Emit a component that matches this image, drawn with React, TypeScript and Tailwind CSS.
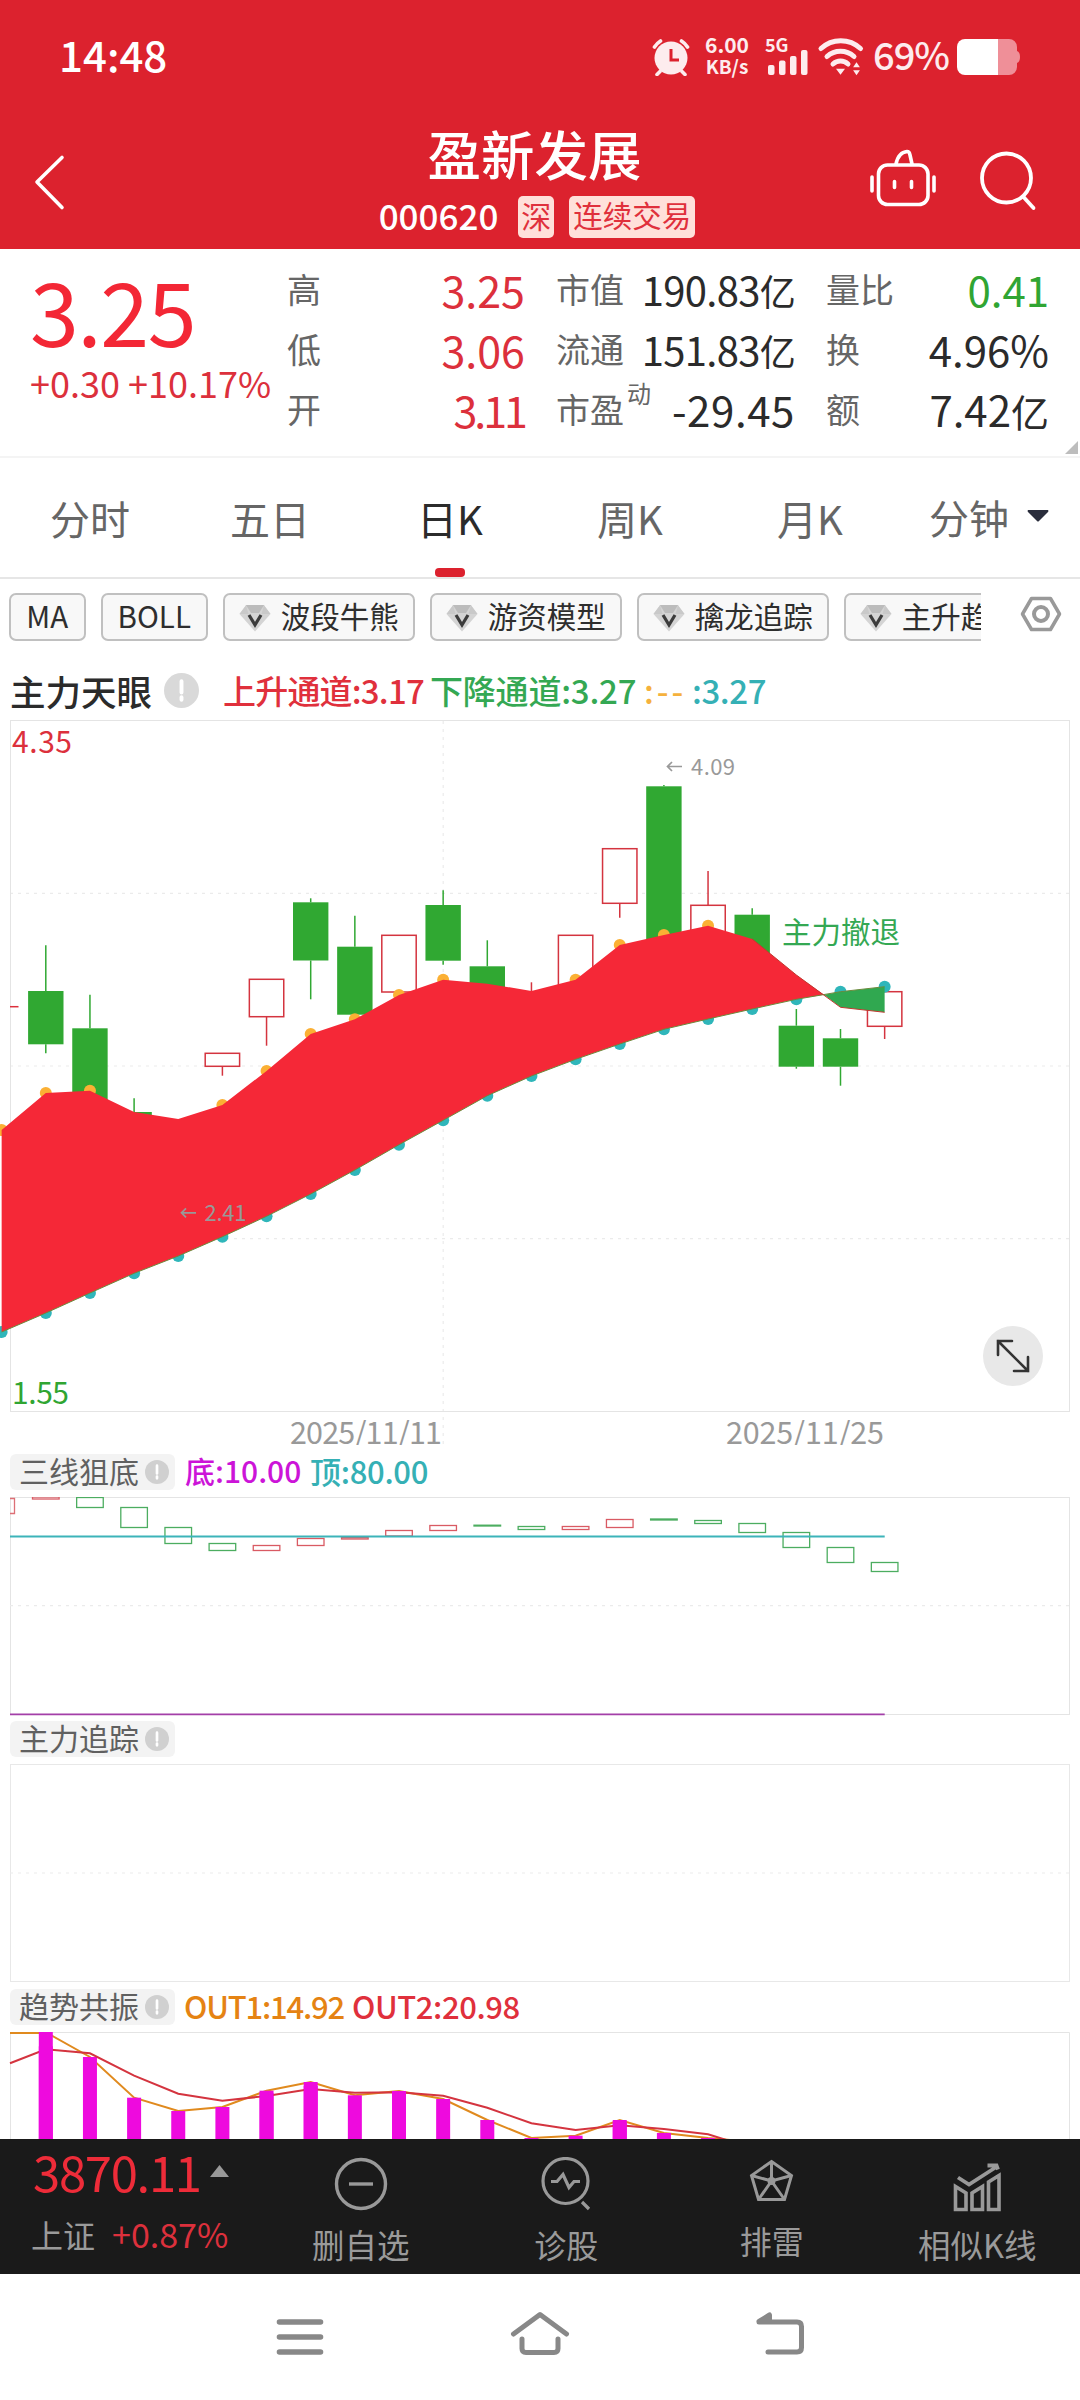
import React from "react";

const FONT = "'Noto Sans CJK SC', 'Noto Sans', sans-serif";

/** Horizontal centre of the n-th trading day. */
const cx = (i: number) => 45.8 + 44.15 * i;

type Candle = { i: number; up: boolean; hi?: number; top: number; bot: number; lo?: number };

const candles: Candle[] = [
  { i: 0, up: false, hi: 945.3, top: 991, bot: 1044.3, lo: 1053.3 },
  { i: 1, up: false, hi: 994.7, top: 1028.3, bot: 1130 },
  { i: 2, up: false, hi: 1098.3, top: 1112, bot: 1150 },
  { i: 4, up: true, top: 1053.3, bot: 1066.3, lo: 1075.7 },
  { i: 5, up: true, top: 979.3, bot: 1016.7, lo: 1045.7 },
  { i: 6, up: false, hi: 898.3, top: 902.3, bot: 960.5, lo: 999.3 },
  { i: 7, up: false, hi: 915.7, top: 946.7, bot: 1014.7 },
  { i: 8, up: true, top: 935.3, bot: 992 },
  { i: 9, up: false, hi: 890.3, top: 905, bot: 960.7, lo: 964.7 },
  { i: 10, up: false, hi: 940.3, top: 966.3, bot: 1000 },
  { i: 11, up: true, hi: 982.3, top: 1000, bot: 1010 },
  { i: 12, up: true, top: 935.3, bot: 1000 },
  { i: 13, up: true, top: 848.7, bot: 903.3, lo: 917.7 },
  { i: 14, up: false, hi: 785, top: 786.3, bot: 960 },
  { i: 15, up: true, hi: 871, top: 905.3, bot: 960 },
  { i: 16, up: false, hi: 908.3, top: 914.7, bot: 960 },
  { i: 17, up: false, hi: 1009, top: 1025.7, bot: 1066.7, lo: 1068.7 },
  { i: 18, up: false, hi: 1029, top: 1038.3, bot: 1066.7, lo: 1085.7 },
  { i: 19, up: true, top: 991.7, bot: 1026.3, lo: 1039 },
];

/* Channel lines; both start one day left of the first visible candle. */
const fast = [1130, 1093, 1090.7, 1112, 1119, 1105, 1071, 1034, 1019.3, 995, 979.7, 983.7, 991, 979.7, 945, 935, 925.7, 939, 975, 1007.3, 1012.3];
const slow = [1332, 1313, 1293, 1273.3, 1256, 1236.7, 1216.3, 1194, 1170, 1144.7, 1120.3, 1095.7, 1076, 1059.3, 1044, 1029.3, 1019, 1009, 999.3, 991.7, 986.7];
const orangeDays = [-1, 0, 1, 4, 5, 6, 7, 8, 9, 12, 13, 14, 15];

const pts = (ys: number[], from = -1) => ys.map((y, k) => `${cx(k + from)},${y}`);

const redArea = [...pts(fast.slice(0, 19)), "824,994.7", ...pts(slow.slice(0, 19)).reverse()].join(" ");
const greenArea = ["824,994.7", `${cx(18)},991.7`, `${cx(19)},986.7`, `${cx(19)},1012.3`, `${cx(18)},1007.3`].join(" ");

const bricks: [number, number, number, boolean][] = [
  [0, 1497, 1499, true], [1, 1497.5, 1507.5, false], [2, 1507.5, 1527.5, false], [3, 1527.5, 1543.5, false],
  [4, 1543.5, 1550.5, false], [5, 1545.5, 1550.5, true], [6, 1538.5, 1545.5, true], [7, 1537.5, 1539, true],
  [8, 1530.5, 1536, true], [9, 1525.5, 1530.5, true], [10, 1525.2, 1526, false], [11, 1526.5, 1529.5, false],
  [12, 1526.5, 1529.5, true], [13, 1519.5, 1527.5, true], [14, 1519, 1520, false], [15, 1520.5, 1523.5, false],
  [16, 1523.5, 1532.5, false], [17, 1532.5, 1547.5, false], [18, 1547.5, 1562.5, false], [19, 1562.5, 1571.5, false],
];

const bars = [2032, 2057, 2097.7, 2111, 2107, 2090.7, 2082, 2095.3, 2091, 2099, 2120, 2138, 2135.7, 2120, 2133, 2138];
const out2 = [2049.3, 2053.3, 2075.7, 2093.7, 2100.7, 2096, 2089, 2092.7, 2092.3, 2095.7, 2107.7, 2123.3, 2130, 2125.3, 2129, 2134.3, 2148];

const GRID = { stroke: "#ebebeb", strokeWidth: 1.2, strokeDasharray: "3 5" };

function StatusIcons() {
  return (
    <>
      <svg className="ml-[488px] mt-[38px] h-[38px] w-[38px] shrink-0" viewBox="652 38 38 38" fill="none">
        <circle cx="671" cy="58" r="16.5" fill="#fdecee" />
        <path d="M671 49v11h8" stroke="#dc222e" strokeWidth="3" />
        <path d="M654.5 47a20 20 0 0 1 6-6M687.5 47a20 20 0 0 0-6-6M657 74.500l3-3M685 74.500l-3-3" stroke="#fdecee" strokeWidth="3.600" strokeLinecap="round" />
      </svg>
      <div className="ml-[12px] mt-[34px] w-[50px] text-center font-bold text-[#fdecee]">
        <div className="text-[21px] leading-[21px]">6.00</div>
        <div className="text-[19px] leading-[21px]">KB/s</div>
      </div>
      <div className="ml-[13px] mt-[35px] w-[46px]">
        <div className="h-[15px] text-[18px] font-bold leading-none text-[#fdecee]">5G</div>
        <svg className="ml-[2px] h-[26px] w-[42px]" viewBox="767 50 42 26" fill="#fdecee">
          <rect x="768" y="65" width="6.500" height="10" rx="2" />
          <rect x="779" y="60.500" width="6.500" height="14.500" rx="2" />
          <rect x="790" y="56" width="6.500" height="19" rx="2" />
          <rect x="801" y="50" width="6.500" height="25" rx="2" />
        </svg>
      </div>
      <svg className="ml-[6px] mt-[37px] h-[40px] w-[48px] shrink-0" viewBox="817 37 48 40" fill="none" stroke="#fdecee" strokeWidth="5" strokeLinecap="round">
        <path d="M821 48.500a29 29 0 0 1 39.500 0M827 56.500a20 20 0 0 1 27 0M833 64a11 11 0 0 1 15 0" />
        <path d="M837.500 69.500h6l-3 4zM854.500 66.500h4l-2-3zM854.500 71h4l-2 3z" fill="#fdecee" strokeWidth="1.500" />
      </svg>
      <div className="ml-[8px] mt-[35px] w-[81px] text-[38px] font-medium leading-none tracking-[-1px] text-[#fdecee]">69%</div>
      <svg className="ml-[3px] mt-[39px] h-[36px] w-[64px] shrink-0" viewBox="957 39 64 36">
        <path d="M998 39h11a8 8 0 0 1 8 8v4q3 1 3 6t-3 6v4a8 8 0 0 1-8 8h-11z" fill="#ef8f98" />
        <path d="M998 39h-33a8 8 0 0 0-8 8v20a8 8 0 0 0 8 8h33z" fill="#fff" />
      </svg>
    </>
  );
}

function Header() {
  return (
    <header className="flex h-[249px] flex-col bg-[#dc222e] text-white">
      <div className="flex h-[113px] shrink-0 items-start">
        <div className="ml-[59px] mt-[33px] w-[105px] whitespace-nowrap text-[42px] font-medium leading-none">14:48</div>
        <StatusIcons />
      </div>
      <div className="flex h-[135px] items-start">
        <svg className="ml-[30px] mt-[39px] h-[60px] w-[38px] shrink-0" viewBox="30 152 38 60" fill="none" stroke="#fff" strokeWidth="3.600" strokeLinecap="round" strokeLinejoin="round">
          <path d="M62 157.500 37 182l25 25.500" />
        </svg>
        <div className="ml-[199px] flex w-[540px] flex-col items-center">
          <h1 className="mt-[13px] pr-[5px] text-[53.500px] font-medium leading-none">盈新发展</h1>
          <div className="mt-[16.500px] flex h-[42px] items-start">
            <span className="mt-px text-[35px] font-medium leading-none">000620</span>
            <span className="ml-[20px] flex h-[42px] w-[36px] justify-center rounded-[5px] bg-[#ffe0da] pt-[4px] text-[30px] leading-none text-[#e0303c]">深</span>
            <span className="ml-[15px] flex h-[42px] w-[126px] justify-center rounded-[5px] bg-[#ffe0da] pt-[4px] text-[29.500px] leading-none text-[#e0303c]">连续交易</span>
          </div>
        </div>
        <svg className="ml-[60px] mt-[33px] h-[64px] w-[70px] shrink-0" viewBox="867 146 70 64" fill="none" stroke="#fff" strokeWidth="3.600" strokeLinecap="round" strokeLinejoin="round">
          <rect x="878.500" y="165" width="49.500" height="39.500" rx="9" />
          <path d="M872 177v14M934 177v14M894.500 181.500v6M911.500 181.500v6M896 164c1.500-7 5-12 11-12.500 2.500 0 2.500 1.500 3 3.500l2 9" />
        </svg>
        <svg className="ml-[40px] mt-[34px] h-[66px] w-[62px] shrink-0" viewBox="977 147 62 66" fill="none" stroke="#fff" strokeWidth="3.800" strokeLinecap="round">
          <circle cx="1006.500" cy="178" r="24.500" />
          <path d="M1023.500 197l10 11" />
        </svg>
      </div>
    </header>
  );
}

function Stat({ label, sup, children, tone }: { label: string; sup?: string; children: React.ReactNode; tone: string }) {
  return (
    <div className="flex h-[60px] items-center justify-between whitespace-nowrap leading-none">
      <span className="flex text-[34px] text-[#666]">
        {label}
        {sup && <sup className="-mt-[11px] ml-[3px] text-[24px] leading-none top-0">{sup}</sup>}
      </span>
      <span className={tone}>{children}</span>
    </div>
  );
}

function Stats() {
  const red = "text-[43px] text-[#dc303c]";
  const dark = "text-[42px] text-[#2b2b2b]";
  const mixed = "text-[40px] text-[#2b2b2b] tracking-[-0.7px]";
  const yi = <span className="text-[36px]">亿</span>;
  return (
    <section className="relative flex h-[209px] border-b-2 border-[#f4f4f4] pt-[10px]">
      <div className="w-[287px] whitespace-nowrap pl-[30px]">
        <div className="mt-[6px] text-[88px] leading-none tracking-[-1.5px] text-[#f32735]">3.25</div>
        <div className="mt-[11px] text-[36px] leading-none text-[#dc303c]">+0.30 +10.17%</div>
      </div>
      <div className="w-[238px]">
        <Stat label="高" tone={red}>3.25</Stat>
        <Stat label="低" tone={red}>3.06</Stat>
        <Stat label="开" tone="text-[43px] text-[#dc303c] tracking-[-3px]">3.11</Stat>
      </div>
      <div className="ml-[31px] w-[239px]">
        <Stat label="市值" tone={mixed}>190.83{yi}</Stat>
        <Stat label="流通" tone={mixed}>151.83{yi}</Stat>
        <Stat label="市盈" sup="动" tone="text-[42px] text-[#2b2b2b] tracking-[0.6px]">-29.45</Stat>
      </div>
      <div className="ml-[31px] w-[223px]">
        <Stat label="量比" tone="text-[42px] text-[#30a532]">0.41</Stat>
        <Stat label="换" tone={dark}>4.96%</Stat>
        <Stat label="额" tone="text-[42px] text-[#2b2b2b]">7.42<span className="text-[38px]">亿</span></Stat>
      </div>
      <svg className="absolute bottom-[2px] right-[2px] h-[13px] w-[13px]" viewBox="0 0 13 13"><path d="M13 0v13H0z" fill="#bdbdbd" /></svg>
    </section>
  );
}

function Tabs() {
  const tabs = ["分时", "五日", "日K", "周K", "月K"];
  return (
    <nav className="grid h-[121px] grid-cols-6 border-b-2 border-[#e6e6e6] text-[40px] leading-none text-[#666]">
      {tabs.map((t) => (
        <div key={t} className={t === "日K" ? "flex flex-col items-center justify-between pt-[40px] text-[#2b2b2b]" : "flex flex-col items-center pt-[40px]"}>
          <span>{t}</span>
          {t === "日K" && <span className="h-[9px] w-[30px] rounded-[4px] bg-[#dc222e]" />}
        </div>
      ))}
      <div className="flex justify-center pt-[39px]">
        <span className="-ml-[2px]">分钟</span>
        <svg className="ml-[18px] mt-[13px] h-[12px] w-[22px]" viewBox="0 0 22 12"><path d="M1 0h20q1 1 0 2l-9 9q-1 1-2 0L1 2q-1-1 0-2z" fill="#2a2d3c" /></svg>
      </div>
    </nav>
  );
}

function Gem() {
  return (
    <svg className="mt-px h-[28px] w-[32px] shrink-0" viewBox="0 0 32 28">
      <path d="M7 1h18l6.500 9L16 27.500.5 10z" fill="#d4d4d4" />
      <path d="M7 1h18l-5 8h-8z" fill="#bcbcbc" />
      <path d="M7 1.500.5 10h9zM25 1.500l6.500 8.500h-9z" fill="#c9c9c9" />
      <path d="M10 11l6 10 6-10" fill="none" stroke="#3c3c3c" strokeWidth="3.200" />
    </svg>
  );
}

function Chips() {
  const chip = "flex h-[48px] shrink-0 items-center justify-center whitespace-nowrap rounded-[7px] border-[2.5px] border-[#c0c0c0] bg-[#f8f8f8] text-[#2e2e2e]";
  return (
    <div className="flex h-[77px] pt-[14px]">
      <div className="ml-[9px] flex h-[48px] w-[972px] gap-[15.500px] overflow-hidden text-[29.500px] leading-none">
        <div className={`${chip} w-[76.500px] pb-[2px]`}>MA</div>
        <div className={`${chip} w-[106.500px] pb-[2px]`}>BOLL</div>
        {["波段牛熊", "游资模型", "擒龙追踪", "主升趋势"].map((t) => (
          <div key={t} className={`${chip} w-[191.500px]`}>
            <Gem />
            <span className="ml-[10px] pb-[2px]">{t}</span>
          </div>
        ))}
      </div>
      <svg className="ml-[38px] mt-[3px] h-[36px] w-[44px]" viewBox="0 0 44 36" fill="none" stroke="#999" strokeWidth="3.500" strokeLinejoin="round">
        <path d="M12.500 2.500h19L40.500 18l-9 15.500h-19L3.500 18z" />
        <circle cx="22" cy="18" r="7" strokeWidth="4" />
      </svg>
    </div>
  );
}

function Info({ big }: { big?: boolean }) {
  return (
    <svg className={big ? "h-[35px] w-[35px] shrink-0" : "h-[24px] w-[24px] shrink-0"} viewBox="0 0 34 34">
      <circle cx="17" cy="17" r="17" fill={big ? "#d9d9d9" : "#d0d0d0"} />
      <path d="M17 8v11M17 23.500v2.500" stroke="#fff" strokeWidth="3.800" strokeLinecap="round" />
    </svg>
  );
}

function MainTitle() {
  return (
    <div className="flex h-[64px] items-start whitespace-nowrap pt-[17px] leading-none">
      <span className="ml-[10px] w-[154px] text-[35.500px] font-medium text-[#2b2b2b]">主力天眼</span>
      <Info big />
      <span className="ml-[24px] mt-px w-[207px] text-[33px] font-medium tracking-[-0.8px] text-[#e0303c]">上升通道:3.17</span>
      <span className="mt-px w-[214px] text-[33px] font-medium tracking-[-0.2px] text-[#34a853]">下降通道:3.27</span>
      <span className="mt-px w-[48px] text-[33px] font-medium tracking-[3px] text-[#f5b13d]">:--</span>
      <span className="mt-px text-[33px] font-medium tracking-[-0.4px] text-[#35b0b5]">:3.27</span>
    </div>
  );
}

function MainChart() {
  return (
    <div className="relative h-[725px]">
      <svg className="block h-[725px] w-[1080px]" viewBox="0 720 1080 725" fontFamily={FONT}>
        <path d="M10 893.300H1069M10 1066H1069M10 1238.700H1069M443.200 721V1445" {...GRID} />
        <rect x="10.500" y="720.500" width="1059" height="691" fill="none" stroke="#e4e4e4" />
        <path d="M10 1006.700h8.500" stroke="#dc303c" strokeWidth="1.500" />
        {candles.map((c) => {
          const color = c.up ? "#d4343f" : "#30a832";
          const x = cx(c.i);
          return (
            <g key={c.i} stroke={color} strokeWidth="1.500">
              {c.hi && <path d={`M${x} ${c.hi}V${c.top}`} />}
              {c.lo && <path d={`M${x} ${c.bot}V${c.lo}`} />}
              {c.up ? (
                <rect x={x - 17.2} y={c.top} width="34.400" height={c.bot - c.top} fill="#fff" />
              ) : (
                <rect x={x - 17.7} y={c.top} width="35.400" height={c.bot - c.top} fill={color} stroke="none" />
              )}
            </g>
          );
        })}
        {orangeDays.map((i) => <circle key={i} cx={cx(i)} cy={fast[i + 1]} r="6" fill="#fbb034" />)}
        {slow.map((y, k) => <circle key={k} cx={cx(k - 1)} cy={y} r="6" fill="#2fb6ba" />)}
        <polygon points={redArea} fill="#f52837" />
        <polygon points={greenArea} fill="#30a850" />
        <polyline points={pts(slow).join(" ")} fill="none" stroke="#6c8a3c" strokeWidth="1" />
        <polyline points={pts(fast.slice(17), 16).join(" ")} fill="none" stroke="#c0392f" strokeWidth="1" />
        <g fontSize="30">
          <text x="12" y="752.500" fill="#dc303c" textLength="60">4.35</text>
          <text x="12" y="1403.500" fill="#30a532" textLength="57">1.55</text>
        </g>
        <g fontSize="30.500" fill="#999">
          <text x="290" y="1443.500" textLength="152">2025/11/11</text>
          <text x="726" y="1443.500" textLength="158">2025/11/25</text>
        </g>
        <g fontSize="22" fill="#999">
          <text x="691" y="774.500" textLength="44">4.09</text>
          <text x="204.500" y="1220.500" textLength="42">2.41</text>
        </g>
        <g fill="none" stroke="#999" strokeWidth="1.700">
          <path d="M682 766.500h-14M672 762l-4.500 4.500 4.500 4.500M196 1212.800h-14M186 1208.300l-4.500 4.500 4.500 4.500" />
        </g>
        <text x="782" y="943" fontSize="29.500" fill="#34a853">主力撤退</text>
      </svg>
      <button className="absolute left-[983px] top-[606px] flex h-[60px] w-[60px] items-center justify-center rounded-full bg-[#e8e8e8]">
        <svg className="h-[36px] w-[36px]" viewBox="0 0 36 36" fill="none" stroke="#333" strokeWidth="2.600" strokeLinecap="round">
          <path d="M3 17V3h14M3 3l30 30M33 19v14H19" />
        </svg>
      </button>
    </div>
  );
}

function SubTitle({ name, children }: { name: string; children?: React.ReactNode }) {
  return (
    <div className="flex items-start whitespace-nowrap text-[30px] font-medium leading-none">
      <div className="ml-[10px] flex h-[36px] w-[165px] rounded-[6px] bg-[#f3f3f3] pl-[9px] pt-px font-normal text-[#606060]">
        <span className="w-[126px]">{name}</span>
        <span className="mt-[5px]"><Info /></span>
      </div>
      {children}
    </div>
  );
}

function SubCharts() {
  return (
    <>
      <div className="h-[52px] pt-[9px]">
        <SubTitle name="三线狙底">
          <span className="ml-[10px] mt-px w-[125px] text-[#cc14d8]">底:10.00</span>
          <span className="mt-px text-[31px] tracking-[-0.3px] text-[#35b0b5]">顶:80.00</span>
        </SubTitle>
      </div>
      <svg className="block h-[219px] w-[1080px]" viewBox="0 1497 1080 219">
        <rect x="10.500" y="1497.500" width="1059" height="217" fill="none" stroke="#e4e4e4" />
        <path d="M10 1605.700H1069" {...GRID} />
        <path d="M10 1498.500h4.500v15h-4.500" fill="none" stroke="#dd6f76" strokeWidth="1.300" />
        {bricks.map(([i, a, b, up]) => (
          <rect key={i} x={cx(i) - 13.3} y={a} width="26.600" height={b - a} fill="none" stroke={up ? "#d95a63" : "#4cad60"} strokeWidth="1.300" />
        ))}
        <path d="M10 1536.500H884.700" stroke="#3cb4b9" strokeWidth="2" />
        <path d="M10 1714.300H884.700" stroke="#a33fa8" strokeWidth="1.800" />
      </svg>
      <div className="h-[48px] pt-[5px]"><SubTitle name="主力追踪" /></div>
      <svg className="block h-[219px] w-[1080px]" viewBox="0 1764 1080 219">
        <rect x="10.500" y="1764.500" width="1059" height="217" fill="none" stroke="#e8e8e8" />
        <path d="M10 1873H1069" {...GRID} />
      </svg>
      <div className="h-[49px] pt-[6px]">
        <SubTitle name="趋势共振">
          <span className="ml-[9px] mt-px w-[168px] text-[31px] tracking-[-1.2px] text-[#e58313]">OUT1:14.92</span>
          <span className="mt-px text-[31px] tracking-[-0.4px] text-[#e0303c]">OUT2:20.98</span>
        </SubTitle>
      </div>
      <svg className="block h-[107px] w-[1080px]" viewBox="0 2032 1080 107">
        <path d="M10.500 2139V2032.500H1069.500V2139" fill="none" stroke="#e4e4e4" />
        <polyline points={["10,2033", "47,2033", ...bars.slice(1).map((y, k) => `${cx(k + 1)},${y}`), `${cx(16)},2142`].join(" ")} fill="none" stroke="#e08a1e" strokeWidth="2" />
        {bars.map((y, i) => <rect key={i} x={cx(i) - 7} y={y} width="14" height={2140 - y} fill="#ee0ade" />)}
        <polyline points={["10,2063.3", ...out2.map((y, k) => `${cx(k)},${y}`)].join(" ")} fill="none" stroke="#d4343f" strokeWidth="2" />
        {bars.map((y, i) => <rect key={i} x={cx(i) - 7} y={Math.max(y, out2[i] - 3)} width="14" height={2140 - y} fill="#ee0ade" fillOpacity={out2[i] > y ? 1 : 0} />)}
      </svg>
    </>
  );
}

function Toolbar() {
  const item = "flex w-[205.500px] flex-col items-center";
  return (
    <footer className="flex h-[135px] bg-[#1a1a1a] leading-none text-[#9a9a9a]">
      <div className="w-[258px] whitespace-nowrap">
        <div className="flex pl-[33px] pt-[7px]">
          <span className="w-[171px] text-[49px] tracking-[-1.3px] text-[#ee2c39]">3870.11</span>
          <svg className="ml-[6px] mt-[19px] h-[12px] w-[19px]" viewBox="0 0 19 12"><path d="M9.500 0 19 12H0z" fill="#999" /></svg>
        </div>
        <div className="mt-[22px] flex items-center pl-[31px]">
          <span className="text-[32px]">上证</span>
          <span className="ml-[17px] text-[34px] text-[#dc303c]">+0.87%</span>
        </div>
      </div>
      <div className={item}>
        <svg className="mt-[18px] h-[54px] w-[54px]" viewBox="0 0 54 54" fill="none" stroke="#999" strokeWidth="3.400">
          <circle cx="27" cy="27" r="24.500" /><path d="M15 27h24" />
        </svg>
        <span className="mt-[17px] text-[32.500px]">删自选</span>
      </div>
      <div className={item}>
        <svg className="mt-[18px] h-[54px] w-[54px]" viewBox="0 0 54 54" fill="none" stroke="#999" strokeWidth="3.200">
          <circle cx="26.500" cy="24" r="22.500" />
          <path d="M12 24.500h6l6-7 6 13 5-6h6M43 45l7 7" />
        </svg>
        <span className="mt-[17px] text-[32px]">诊股</span>
      </div>
      <div className={item}>
        <svg className="mt-[18px] h-[54px] w-[54px]" viewBox="0 0 54 54" fill="none" stroke="#999" strokeWidth="3">
          <path d="M26.500 4.500 46.500 18.500 39.500 42.500h-26L6.500 18.500z" />
          <path d="M26.500 4v20M46.500 18.500l-20 5.500-20-5.500M13.500 42.500l13-18.500 13 18.500" />
          <circle cx="26.500" cy="24" r="2.500" fill="#999" />
        </svg>
        <span className="mt-[13px] text-[32px]">排雷</span>
      </div>
      <div className={item}>
        <svg className="mt-[18px] h-[56px] w-[54px]" viewBox="0 0 54 56" fill="none" stroke="#999" strokeWidth="3.600">
          <path d="M5.500 52.500V29.500l10.500 6.500v16.500zM22 52.500V36l10.500-6.500v23zM38.500 52.500V25l10.500-6.500v34z" />
          <path d="M8 20.500l11 7L47 9.500M37.500 8.500h9l1.500 4" strokeWidth="3.800" />
        </svg>
        <span className="mt-[15px] text-[32.500px]">相似K线</span>
      </div>
    </footer>
  );
}

function SystemNav() {
  return (
    <div className="flex h-[126px] justify-between bg-white px-[270px] pt-[33px]">
      <svg className="h-[56px] w-[60px]" viewBox="270 2307 60 56" stroke="#888" strokeWidth="5.600" strokeLinecap="round">
        <path d="M279.500 2322h41M279.500 2337h41M279.500 2352h41" />
      </svg>
      <svg className="h-[56px] w-[60px]" viewBox="510 2307 60 56" fill="none" stroke="#888" strokeWidth="5" strokeLinecap="round" strokeLinejoin="round">
        <path d="M513.500 2334 540 2314.500 566.500 2334M522 2339v9.500q0 4 4 4h28q4 0 4-4V2339" />
      </svg>
      <svg className="h-[56px] w-[60px]" viewBox="750 2307 60 56" fill="none" stroke="#888" strokeWidth="5" strokeLinecap="round" strokeLinejoin="round">
        <path d="M768 2352h29q4.500 0 4.500-4.500v-21q0-4.500-4.500-4.500H759M759 2321.500l10.500-6.500v6" />
      </svg>
    </div>
  );
}

export default function App() {
  return (
    <main className="h-[2400px] w-[1080px] overflow-hidden bg-white" style={{ fontFamily: FONT }}>
      <Header />
      <Stats />
      <Tabs />
      <Chips />
      <MainTitle />
      <MainChart />
      <SubCharts />
      <Toolbar />
      <SystemNav />
    </main>
  );
}
